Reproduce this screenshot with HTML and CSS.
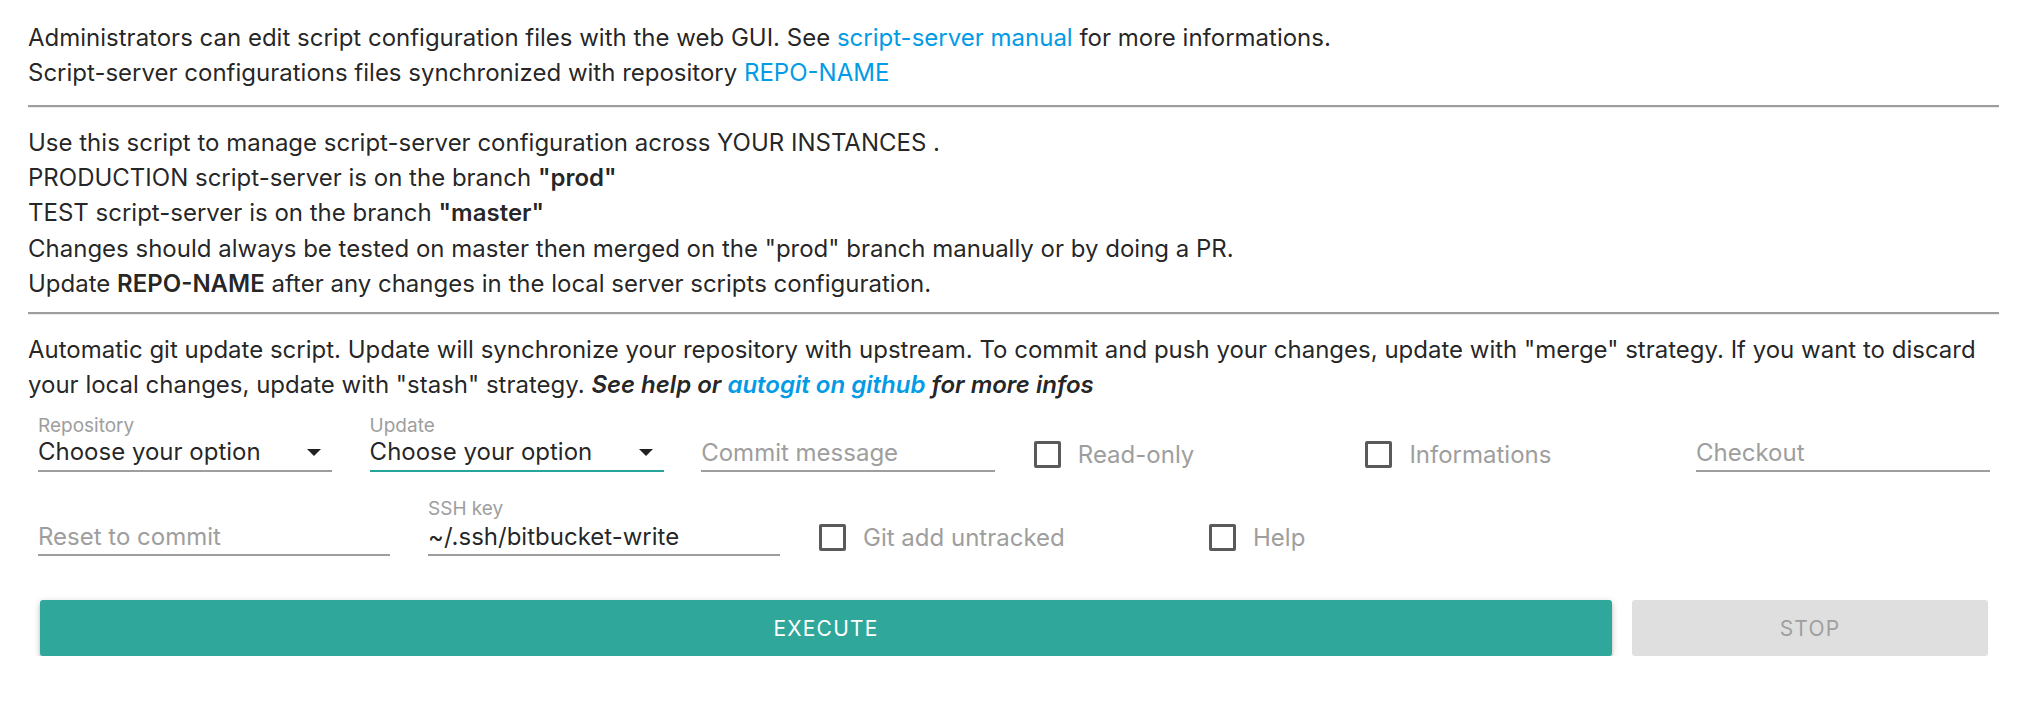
FILE: index.html
```html
<!DOCTYPE html>
<html lang="en">
<head>
<meta charset="UTF-8">
<title>Script server - autogit</title>
<link rel="stylesheet" href="styles.css">
</head>
<body>
<div class="page">
  <div class="description">
    <p>Administrators can edit script configuration files with the web GUI. See <a href="#">script-server manual</a> for more informations.<br>Script-server configurations files synchronized with repository <a href="#">REPO-NAME</a></p>
    <hr class="rule rule-first">
    <p>Use this script to manage script-server configuration across YOUR INSTANCES .<br>PRODUCTION script-server is on the branch <b>"prod"</b><br>TEST script-server is on the branch <b>"master"</b><br>Changes should always be tested on master then merged on the "prod" branch manually or by doing a PR.<br>Update <b>REPO-NAME</b> after any changes in the local server scripts configuration.</p>
    <hr class="rule">
    <p>Automatic git update script. Update will synchronize your repository with upstream. To commit and push your changes, update with "merge" strategy. If you want to discard your local changes, update with "stash" strategy. <b class="note">See help or <a href="#">autogit on github</a> for more infos</b></p>
  </div>

  <div class="params">
    <div class="param-row">
      <div class="field">
        <label class="field-label">Repository</label>
        <div class="field-control select-box"><span>Choose your option</span><svg class="caret" width="14" height="7" viewBox="0 0 14 7"><path d="M0 0h14L7 7z"/></svg></div>
      </div>
      <div class="field">
        <label class="field-label">Update</label>
        <div class="field-control select-box focused"><span>Choose your option</span><svg class="caret" width="14" height="7" viewBox="0 0 14 7"><path d="M0 0h14L7 7z"/></svg></div>
      </div>
      <div class="field">
        <label class="field-label"></label>
        <input class="field-control" type="text" placeholder="Commit message">
      </div>
      <label class="check"><span class="check-box"></span>Read-only</label>
      <label class="check"><span class="check-box"></span>Informations</label>
      <div class="field">
        <label class="field-label"></label>
        <input class="field-control" type="text" placeholder="Checkout">
      </div>
    </div>

    <div class="param-row param-row-wide">
      <div class="field">
        <label class="field-label"></label>
        <input class="field-control" type="text" placeholder="Reset to commit">
      </div>
      <div class="field">
        <label class="field-label">SSH key</label>
        <input class="field-control" type="text" value="~/.ssh/bitbucket-write">
      </div>
      <label class="check"><span class="check-box"></span>Git add untracked</label>
      <label class="check"><span class="check-box"></span>Help</label>
    </div>
  </div>

  <div class="actions">
    <button class="btn btn-execute">Execute</button>
    <button class="btn btn-stop" disabled>Stop</button>
  </div>
</div>
</body>
</html>
```

FILE: styles.css
```css
* {
  margin: 0;
  padding: 0;
  box-sizing: border-box;
}
body {
  font-family: Inter, "Liberation Sans", sans-serif;
  color: rgba(0, 0, 0, 0.87);
  background-color: white;
}
.page {
  padding: 20px 23px 0 28px;
}
.description p {
  font-size: 24px;
  line-height: 35.2px;
}
.description b {
  font-weight: 600;
}
.description .note {
  font-style: italic;
}
a {
  color: #039be5;
  text-decoration: none;
}
.rule {
  border: 0;
  border-top: 2px solid #9d9d9d;
  border-bottom: 1px solid #ececec;
  margin: 11px 0 17px;
}
.rule-first {
  margin-top: 14.5px;
}

/* parameters */
.params {
  margin: 13px 9px 0 10px;
}
.param-row {
  display: grid;
  grid-template-columns: repeat(6, 1fr);
  column-gap: 37.6px;
}
.param-row-wide {
  display: flex;
  gap: 38px;
  margin-top: 26px;
}
.param-row-wide > * {
  width: 352px;
}
.field {
  display: flex;
  flex-direction: column;
}
.field-label {
  display: block;
  height: 22px;
  line-height: 22px;
  font-size: 19px;
  color: #9e9e9e;
}
.field-control {
  display: flex;
  align-items: center;
  width: 100%;
  height: 35px;
  padding: 0 0 3px;
  font-family: inherit;
  font-size: 24px;
  line-height: 30px;
  color: rgba(0, 0, 0, 0.87);
  background: none;
  border: 0;
  border-bottom: 2px solid #9e9e9e;
  outline: none;
}
.param-row-wide .field-control {
  padding-bottom: 1px;
  height: 36px;
}
.field-control::placeholder {
  color: #9e9e9e;
}
.select-box span {
  flex: 1;
}
.select-box.focused {
  border-bottom-color: #26a69a;
}
.caret {
  margin-right: 11px;
  fill: rgba(0, 0, 0, 0.87);
}
.check {
  display: flex;
  align-items: center;
  gap: 17px;
  height: 35px;
  margin-top: 22px;
  padding-left: 1px;
  font-size: 24px;
  color: #9e9e9e;
  white-space: nowrap;
}
.check-box {
  flex: none;
  width: 27px;
  height: 27px;
  border: 3px solid #5a5a5a;
  border-radius: 2px;
}

/* buttons */
.actions {
  display: flex;
  gap: 20px;
  margin: 44px 11px 0 12px;
}
.btn {
  height: 56px;
  border: 0;
  border-radius: 3px;
  font-family: inherit;
  font-size: 21px;
  letter-spacing: 1.2px;
  text-transform: uppercase;
}
.btn-execute {
  flex: 1;
  color: white;
  background-color: #2fa79a;
  box-shadow: 0 3px 3px 0 rgba(0, 0, 0, 0.14), 0 4px 2px -3px rgba(0, 0, 0, 0.12), 0 2px 7px 0 rgba(0, 0, 0, 0.2);
}
.btn-stop {
  width: 356px;
  color: #9f9f9f;
  background-color: #dfdfdf;
}
```
